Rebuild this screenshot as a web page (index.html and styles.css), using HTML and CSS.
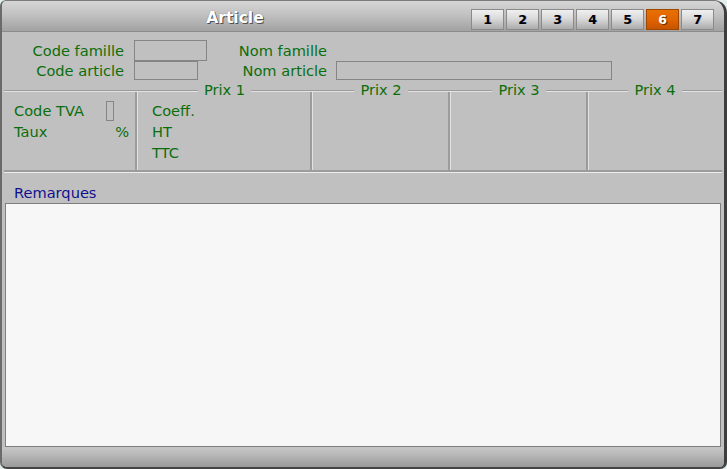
FILE: index.html
```html
<!DOCTYPE html>
<html>
<head>
<meta charset="utf-8">
<link rel="stylesheet" href="styles.css">
</head>
<body>
<div class="window">
  <div class="titlebar">
    <div class="title">Article</div>
    <div class="tabs">
      <span class="tab">1</span>
      <span class="tab">2</span>
      <span class="tab">3</span>
      <span class="tab">4</span>
      <span class="tab">5</span>
      <span class="tab active">6</span>
      <span class="tab">7</span>
    </div>
  </div>
  <div class="ident">
    <span class="lbl">Code famille</span>
    <span class="box box-fam"></span>
    <span class="lbl">Nom famille</span>
    <span></span>
    <span class="lbl">Code article</span>
    <span class="box box-art"></span>
    <span class="lbl">Nom article</span>
    <span class="box box-nom"></span>
  </div>
  <div class="prices">
    <div class="col col-tva">
      <div class="head"><span class="line"></span></div>
      <div class="body">
        <div class="tva-grid">
          <span class="txt">Code TVA</span><span class="box box-tva"></span>
          <span class="txt">Taux</span><span class="txt pct">%</span>
        </div>
      </div>
    </div>
    <div class="col col-p1">
      <div class="head"><span class="line"></span><span class="legend">Prix 1</span><span class="line"></span></div>
      <div class="body body-p1">
        <div class="txt">Coeff.</div>
        <div class="txt">HT</div>
        <div class="txt">TTC</div>
      </div>
    </div>
    <div class="col col-p2">
      <div class="head"><span class="line"></span><span class="legend">Prix 2</span><span class="line"></span></div>
      <div class="body"></div>
    </div>
    <div class="col col-p3">
      <div class="head"><span class="line"></span><span class="legend">Prix 3</span><span class="line"></span></div>
      <div class="body"></div>
    </div>
    <div class="col col-p4">
      <div class="head"><span class="line"></span><span class="legend">Prix 4</span><span class="line"></span></div>
      <div class="body last"></div>
    </div>
  </div>
  <div class="remarks-label">Remarques</div>
  <div class="remarks"></div>
  <div class="footer"></div>
</div>
</body>
</html>
```

FILE: styles.css
```css
html, body {
  margin: 0;
  padding: 0;
  background: #e2efed;
}
body {
  font-family: "DejaVu Sans", Verdana, sans-serif;
  font-size: 14.6px;
  color: #0b6e0b;
}
.window {
  width: 727px;
  height: 469px;
  box-sizing: border-box;
  background: #c0c0c0;
  border-top: 1px solid #7a7a7a;
  border-left: 2px solid #6a6a6a;
  border-right: 3px solid #3e3e3e;
  border-bottom: 2px solid #444;
  border-radius: 6px 13px 7px 7px;
  overflow: hidden;
  display: flex;
  flex-direction: column;
}
.titlebar {
  height: 30px;
  flex: none;
  display: flex;
  align-items: center;
  background: linear-gradient(#d6d6d6, #c4c4c4 40%, #a2a2a2);
  border-bottom: 1px solid #8c8c8c;
}
.title {
  flex: 1;
  text-align: center;
  padding-top: 3px;
  padding-right: 3px;
  font-weight: bold;
  font-size: 15.5px;
  color: #fff;
  text-shadow: 1px 1px 0 #505050, 0 0 1px #707070;
}
.tabs {
  display: flex;
  gap: 2px;
  padding-right: 10px;
  padding-top: 8px;
  align-self: stretch;
  box-sizing: border-box;
}
.tab {
  width: 33px;
  height: 21px;
  box-sizing: border-box;
  border: 1px solid #8a8a8a;
  background: linear-gradient(#f0f0f0, #dadada 45%, #acacac);
  color: #000;
  font-weight: bold;
  font-size: 12.5px;
  display: flex;
  align-items: center;
  justify-content: center;
  text-shadow: 1px 0 0 rgba(0,0,160,0.25);
}
.tab.active {
  background: linear-gradient(#e87000, #e06400 50%, #c85400);
  border-color: #a04800;
  color: #fff;
  text-shadow: 1px 1px 0 #703000;
}
.ident {
  display: grid;
  grid-template-columns: 122px 10px 73px 120px 9px 276px;
  grid-template-rows: 21px 19px;
  margin-top: 8px;
  align-items: center;
}
.ident .lbl {
  text-align: right;
  line-height: 19px;
  margin-top: -1px;
}
.ident > :nth-child(2), .ident > :nth-child(6) { grid-column: 3; }
.ident > :nth-child(1), .ident > :nth-child(5) { grid-column: 1; }
.ident > :nth-child(3), .ident > :nth-child(7) { grid-column: 4; }
.ident > :nth-child(4), .ident > :nth-child(8) { grid-column: 6; }
.box {
  box-sizing: border-box;
  border: 1px solid #858585;
  display: block;
}
.box-fam { width: 73px; height: 21px; }
.box-art { width: 64px; height: 19px; }
.box-nom { width: 276px; height: 19px; }
.prices {
  display: flex;
  margin: 10px 2px 0 2px;
  height: 83px;
  border-bottom: 1px solid #ececec;
  box-sizing: border-box;
}
.col {
  display: flex;
  flex-direction: column;
  box-sizing: border-box;
  border-bottom: 2px solid #9c9c9c;
}
.col-tva { width: 133px; }
.col-p1 { width: 175px; }
.col-p2 { width: 138px; }
.col-p3 { width: 138px; }
.col-p4 { width: 134px; }
.head {
  height: 2px;
  flex: none;
  display: flex;
  align-items: center;
}
.line {
  flex: 1;
  height: 2px;
  box-sizing: border-box;
  border-top: 1px solid #9c9c9c;
  border-bottom: 1px solid #e2e2e2;
}
.legend {
  padding: 0 6px;
  line-height: 18px;
  margin-top: -2px;
}
.body {
  flex: 1;
  box-sizing: border-box;
  border-right: 2px solid #9c9c9c;
  border-left: 1px solid #e2e2e2;
}
.col-tva .body { border-left: none; }
.body.last { border-right: none; }
.tva-grid {
  display: grid;
  grid-template-columns: 92px 1fr;
  grid-auto-rows: 21px;
  padding: 8px 6px 0 10px;
  align-items: center;
}
.txt { line-height: 21px; }
.box-tva { width: 8px; height: 20px; }
.pct { text-align: right; }
.body-p1 { padding: 8px 0 0 14px; }
.remarks-label {
  color: #101090;
  padding-left: 12px;
  margin-top: 10px;
  line-height: 19px;
}
.remarks {
  margin: 1px 3px 0 3px;
  height: 244px;
  flex: none;
  box-sizing: border-box;
  background: #f7f7f7;
  border: 1px solid #7e7e7e;
}
.footer {
  flex: 1;
  background: linear-gradient(#c6c6c6, #bcbcbc 30%, #9a9a9a);
}
```
